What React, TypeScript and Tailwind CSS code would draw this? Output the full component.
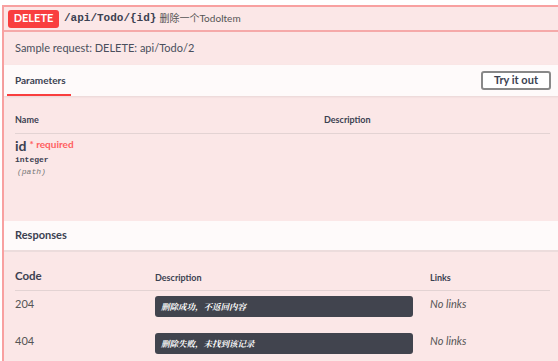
import React from 'react';

const sans = "font-['Lato','Noto_Sans_CJK_SC',sans-serif]";
const mono = "font-['Liberation_Mono','DejaVu_Sans_Mono',monospace]";

const responses = [
  { code: '204', desc: '删除成功，不返回内容' },
  { code: '404', desc: '删除失败，未找到该记录' },
];

export default function App() {
  return (
    <div className={`w-[558px] h-[361px] overflow-hidden bg-white pt-[5px] pl-[2px] ${sans} text-[#3b4151]`}>
      <div className="w-[570px] h-[400px] bg-[#fbe7e7] border-l-2 border-t-2 border-[#f8a0a0]">
        {/* summary */}
        <div className="flex items-center h-[25px] pl-[4px] border-b-2 border-[#f5a9a9]">
          <span className="w-[51px] h-[18px] flex items-center justify-center rounded-[3px] bg-[#f93e3e] text-white text-[11px] font-bold">
            DELETE
          </span>
          <span className={`ml-[5px] text-[11px] font-bold ${mono}`}>/api/Todo/{'{id}'}</span>
          <span className="ml-[3px] text-[10px] text-[#555]">删除一个TodoItem</span>
        </div>

        {/* sample */}
        <div className="h-[33px] flex items-center pl-[11px] text-[11px] text-[#4a4f5c]">
          Sample request: DELETE: api/Todo/2
        </div>

        {/* parameters header */}
        <div className="h-[31px] bg-[#fefafa] flex items-center justify-between pr-[21px] shadow-[0_1px_2px_rgba(0,0,0,0.08)]">
          <div className="relative h-full flex items-center pl-[11px] pr-[5px] ml-[-5px]">
            <span className="pl-[5px] text-[10px] font-bold">Parameters</span>
            <span className="absolute left-[8px] right-0 bottom-0 h-[2px] bg-[#f93e3e]" />
          </div>
          <button className="w-[70px] h-[19px] border-2 border-[#888] rounded-[3px] text-[11px] font-bold bg-white flex items-center justify-center">
            Try it out
          </button>
        </div>

        {/* parameters table */}
        <div className="pl-[11px] w-[546px]">
          <div className="flex h-[38px] items-end pb-[7px] border-b border-[#e3d3d3] text-[9px] font-bold">
            <div className="w-[309px]">Name</div>
            <div>Description</div>
          </div>
          <div className="pt-[4px] h-[87px]">
            <div className="flex items-start">
              <span className="text-[14px] font-bold leading-[16px]">id</span>
              <span className="ml-[3px] text-[10px] font-bold text-[#ff6060] leading-[12px]">* required</span>
            </div>
            <div className={`text-[8px] font-bold leading-[12px] ${mono}`}>integer</div>
            <div className={`text-[8px] italic text-[#777] leading-[12px] pl-[2px] ${mono}`}>(path)</div>
          </div>
        </div>

        {/* responses header */}
        <div className="h-[31px] bg-[#fefafa] flex items-center pl-[11px] border-b-2 border-[#ecdcdc]">
          <span className="text-[11px] font-bold">Responses</span>
        </div>

        <div className="pl-[11px] w-[546px]">
          <div className="flex h-[39px] items-end pb-[6px] border-b border-[#e3d3d3] font-bold">
            <div className="w-[140px] text-[11.5px]">Code</div>
            <div className="w-[275px] text-[9px]">Description</div>
            <div className="text-[9px]">Links</div>
          </div>
          {responses.map((r) => (
            <div key={r.code} className="flex items-start pt-[5px] h-[37px]">
              <div className="w-[140px] text-[11px] text-[#555]">{r.code}</div>
              <div className="w-[275px]">
                <div className="w-[258px] h-[21px] rounded-[3px] bg-[#41444e] flex items-center pl-[6px] text-[8.5px] italic font-bold text-white font-['Noto_Serif_CJK_SC','Noto_Sans_CJK_SC',serif]">
                  {r.desc}
                </div>
              </div>
              <div className="text-[11px] italic text-[#555]">No links</div>
            </div>
          ))}
        </div>
      </div>
    </div>
  );
}
